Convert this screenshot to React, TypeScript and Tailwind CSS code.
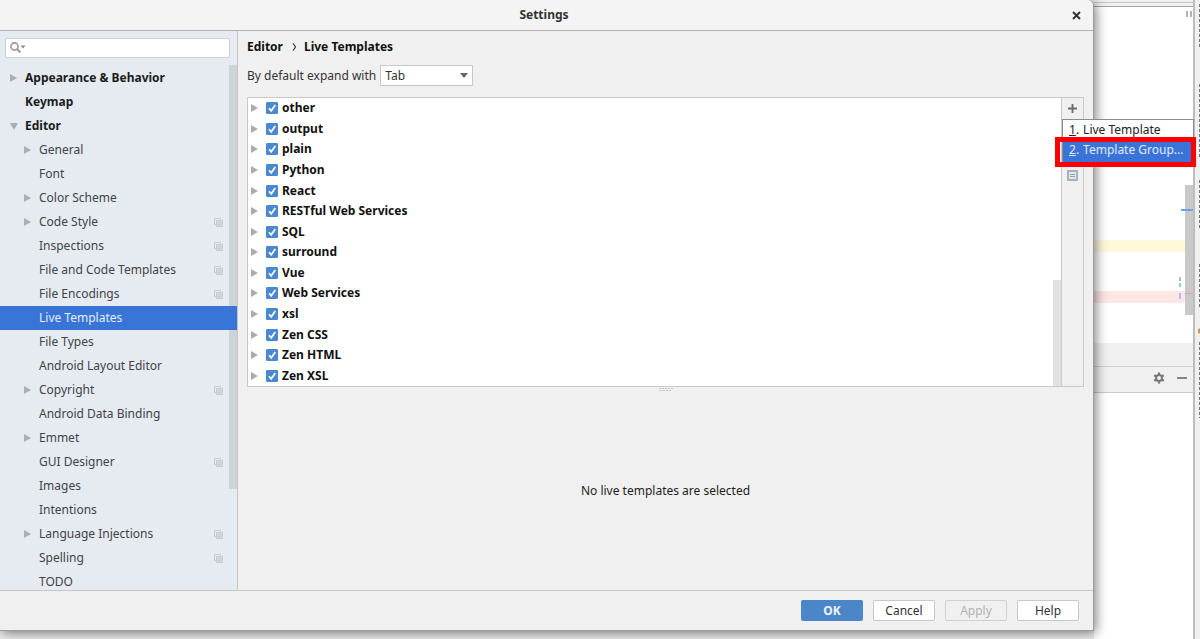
import { useState } from "react";

type TreeItem = {
  name: string;
  level: 0 | 1;
  arrow?: "closed" | "open";
  shared?: boolean;
};

const treeItems: TreeItem[] = [
  { name: "Appearance & Behavior", level: 0, arrow: "closed" },
  { name: "Keymap", level: 0 },
  { name: "Editor", level: 0, arrow: "open" },
  { name: "General", level: 1, arrow: "closed" },
  { name: "Font", level: 1 },
  { name: "Color Scheme", level: 1, arrow: "closed" },
  { name: "Code Style", level: 1, arrow: "closed", shared: true },
  { name: "Inspections", level: 1, shared: true },
  { name: "File and Code Templates", level: 1, shared: true },
  { name: "File Encodings", level: 1, shared: true },
  { name: "Live Templates", level: 1 },
  { name: "File Types", level: 1 },
  { name: "Android Layout Editor", level: 1 },
  { name: "Copyright", level: 1, arrow: "closed", shared: true },
  { name: "Android Data Binding", level: 1 },
  { name: "Emmet", level: 1, arrow: "closed" },
  { name: "GUI Designer", level: 1, shared: true },
  { name: "Images", level: 1 },
  { name: "Intentions", level: 1 },
  { name: "Language Injections", level: 1, arrow: "closed", shared: true },
  { name: "Spelling", level: 1, shared: true },
  { name: "TODO", level: 1 },
];

const templateGroups = [
  "other",
  "output",
  "plain",
  "Python",
  "React",
  "RESTful Web Services",
  "SQL",
  "surround",
  "Vue",
  "Web Services",
  "xsl",
  "Zen CSS",
  "Zen HTML",
  "Zen XSL",
];

const Arrow = ({ open = false }: { open?: boolean }) => (
  <svg viewBox="0 0 8 8" className="w-2 h-2 shrink-0 fill-[#a9adb1]" aria-hidden="true">
    {open ? <path d="M0 1h8L4 8z" /> : <path d="M0 0l7 4-7 4z" />}
  </svg>
);

const SharedIcon = () => (
  <svg viewBox="0 0 9 9" className="w-[9px] h-[9px] shrink-0" fill="none" stroke="#c6cacf" aria-hidden="true">
    <path d="M2.5 6.5h-2v-6h6v2" />
    <path d="M2.5 2.5h6v6h-6z" fill="#d6dade" />
    <path d="M4 4.5h3M4 6.5h3" />
  </svg>
);

const Sidebar = () => {
  const [selected, setSelected] = useState("Live Templates");

  return (
    <aside className="relative flex flex-col w-[238px] shrink-0 overflow-hidden bg-[#e6ebf2] border-r border-[#c3c6c9]">
      <div className="flex items-center gap-px h-5 mt-[7px] mb-2 ml-[5px] mr-[7px] px-1 bg-white border border-[#cdd1d5] rounded-xs">
        <svg viewBox="0 0 16 12" className="w-4 h-3 shrink-0" aria-hidden="true">
          <circle cx="4.5" cy="4.5" r="3.6" fill="none" stroke="#999" strokeWidth="1.6" />
          <path d="M7 7l3.4 3.6" stroke="#999" strokeWidth="2" />
          <path d="M10.5 3.5h5L13 6.5z" fill="#888" />
        </svg>
        <input type="search" aria-label="Search settings" className="w-full min-w-0 outline-none bg-transparent" />
      </div>

      {/* Last row is partly scrolled out of view */}
      <ul className="grid auto-rows-fr flex-1 -mb-1">
        {treeItems.map((item) => {
          const active = item.name === selected;
          return (
            <li key={item.name} className={active ? "relative z-10 bg-[#3875d7]" : ""}>
              <button
                type="button"
                onClick={() => setSelected(item.name)}
                className={`flex items-center w-full h-full pr-3.5 text-left leading-4 ${
                  item.level === 0 ? "pl-2.5 font-bold text-[#1c1c1c]" : active ? "pl-6 text-[#e6eefb]" : "pl-6 text-[#3f4347]"
                }`}
              >
                <span className="flex w-[15px] shrink-0">
                  {item.arrow && <Arrow open={item.arrow === "open"} />}
                </span>
                <span className="flex-1">{item.name}</span>
                {item.shared && <SharedIcon />}
              </button>
            </li>
          );
        })}
      </ul>

      <div className="absolute right-0 top-[34px] w-2 h-[424px] bg-[#cfd3d7]" />
    </aside>
  );
};

const GroupRow = ({ name }: { name: string }) => {
  const [checked, setChecked] = useState(true);

  return (
    <li className="flex items-center pl-[3px]">
      <Arrow />
      <label className="flex items-center gap-1 pl-[7px] font-bold text-[#111]">
        <span className="relative flex">
          <input
            type="checkbox"
            checked={checked}
            onChange={(e) => setChecked(e.target.checked)}
            className="appearance-none w-3 h-3 bg-white checked:bg-[#4a88cf] border border-[#4a88cf] rounded-[1px]"
          />
          {checked && (
            <svg viewBox="0 0 12 12" className="absolute inset-0 w-3 h-3 pointer-events-none" fill="none" stroke="#fff" strokeWidth="1.7">
              <path d="M3 6.2L5.2 8.8 9.3 3" />
            </svg>
          )}
        </span>
        {name}
      </label>
    </li>
  );
};

const AddMenu = () => (
  <div className="absolute left-0 top-[21px] z-20 w-[132px] bg-white border border-[#8c8c8c] text-[#222]">
    <button type="button" className="flex gap-1 w-full h-5 pl-1.5 items-center whitespace-nowrap">
      <span><u>1</u>.</span>Live Template
    </button>
    <button type="button" className="flex gap-1 w-full h-[22px] pl-1.5 pb-0.5 items-center whitespace-nowrap bg-[#3b74d8] text-[#e2ebfa]">
      <span><u>2</u>.</span>Template Group...
    </button>
    {/* Red marker round the second entry */}
    <div className="absolute -left-2 top-[17px] w-[141px] h-[30px] border-[5px] border-[#fe0000] pointer-events-none" />
  </div>
);

const MainPanel = () => (
  <main className="flex flex-col flex-1 min-w-0 px-[9px] pt-[7px]">
    <h1 className="flex gap-2 h-[18px] items-center font-bold text-[#111]">
      Editor
      <svg viewBox="0 0 5 8" className="w-[5px] h-2" fill="none" stroke="#333" strokeWidth="1.2" aria-hidden="true">
        <path d="M2 .5L4.6 4 2 7.5" />
      </svg>
      Live Templates
    </h1>

    <div className="flex items-center gap-1 mt-[9px]">
      <label htmlFor="expand">By default expand with</label>
      <div className="relative flex items-center">
        <select id="expand" defaultValue="Tab" className="appearance-none w-[93px] h-[21px] pl-1 bg-white border border-[#c8c8c8] outline-none">
          <option>Tab</option>
          <option>Enter</option>
          <option>Space</option>
        </select>
        <svg viewBox="0 0 8 5" className="absolute right-[5px] w-2 h-[5px] fill-[#666] pointer-events-none" aria-hidden="true">
          <path d="M0 0h8L4 5z" />
        </svg>
      </div>
    </div>

    <section className="flex h-[290px] mt-[11px] border border-[#c9c9c9]">
      <ul className="grid auto-rows-fr flex-1 bg-white">
        {templateGroups.map((name) => (
          <GroupRow key={name} name={name} />
        ))}
      </ul>
      <div className="flex items-end w-2 bg-white">
        <div className="w-full h-[106px] bg-[#e1e1e1]" />
      </div>
      <div className="relative flex flex-col items-center w-[22px] pt-[5px] border-l border-[#c9c9c9]">
        <button type="button" aria-label="Add">
          <svg viewBox="0 0 11 11" className="w-[11px] h-[11px]" stroke="#686868" strokeWidth="1.8">
            <path d="M5.5 1v9M1 5.5h9" />
          </svg>
        </button>
        <button type="button" aria-label="Duplicate" className="mt-14">
          <svg viewBox="0 0 11 11" className="w-[11px] h-[11px]" fill="none" aria-hidden="true">
            <path d="M0 0h11v11H0z" fill="#a9b2b6" />
            <path d="M2 2h7v7H2z" fill="#e4e8ea" />
            <path d="M3 4.5h5M3 6.5h5" stroke="#94a0a5" />
          </svg>
        </button>
        <AddMenu />
      </div>
    </section>

    <svg viewBox="0 0 14 4" className="w-3.5 h-1 mt-px self-center" stroke="#c4c4c4" aria-hidden="true">
      <path d="M0 .5h14M1 2.5h12" strokeDasharray="2 1" />
    </svg>

    <p className="flex flex-1 items-center justify-center text-[#1e1e1e]">No live templates are selected</p>
  </main>
);

const Dialog = () => (
  <div className="relative z-10 flex flex-col flex-1 min-w-0 mb-2 bg-[#f0f0f0] border-r border-b border-[#9c9c9c] rounded-tr-md shadow-[2px_2px_12px_rgba(0,0,0,0.5)]">
    <header className="flex items-center h-[31px] shrink-0 bg-[#f4f4f4] border-b border-[#b2b2b2] rounded-tr-md">
      <h2 className="flex-1 pl-4 text-center font-bold text-[#333]">Settings</h2>
      <button type="button" aria-label="Close" className="mr-3">
        <svg viewBox="0 0 9 9" className="w-[9px] h-[9px]" stroke="#333" strokeWidth="2">
          <path d="M1 1l7 7M8 1L1 8" />
        </svg>
      </button>
    </header>

    <div className="flex flex-1">
      <Sidebar />
      <MainPanel />
    </div>

    <footer className="flex items-center justify-end gap-2.5 h-10 shrink-0 pr-3.5 border-t border-[#c6c6c6]">
      <button type="button" className="w-[62px] h-[21px] rounded-xs bg-[#4a86c8] font-bold text-[#eef4fb]">OK</button>
      <button type="button" className="w-[62px] h-[21px] rounded-xs bg-white border border-[#c8c8c8] text-[#333]">Cancel</button>
      <button type="button" disabled className="w-[62px] h-[21px] rounded-xs border border-[#d0d0d0] text-[#b0b0b0]">Apply</button>
      <button type="button" className="w-[62px] h-[21px] rounded-xs bg-white border border-[#c8c8c8] text-[#333]">Help</button>
    </footer>
  </div>
);

// The slice of the IDE window that shows beside the dialog
const IdeWindow = () => (
  <div className="flex w-[106px] shrink-0 bg-[#f0f0f0]">
    <div className="flex flex-col flex-1">
      <div className="h-[3px] border-b border-[#c4c4c4]" />
      <div className="h-1 border-b border-[#a2a2a2]" />
      <div className="flex h-[336px] bg-white">
        <div className="flex flex-col flex-1">
          <div className="h-[233px]" />
          <div className="h-3 bg-[#fff9dc]" />
          <div className="flex flex-col items-end justify-end h-[39px] pr-1 pb-1">
            <div className="w-0.5 h-1 mb-0.5 bg-[#b9b9b9]" />
            <div className="w-0.5 h-1 bg-[#8fe09b]" />
          </div>
          <div className="flex justify-end h-3 pr-1 bg-[#fde6e6]">
            <div className="w-0.5 h-1.5 mt-0.5 bg-[#b3b9f5]" />
          </div>
        </div>
        <div className="flex flex-col items-center w-2">
          <svg viewBox="0 0 6 6" className="w-1.5 h-1.5 mt-1 shrink-0" stroke="#999" strokeWidth="1.5" aria-hidden="true">
            <path d="M1 0v6M5 0v6" />
          </svg>
          <div className="w-full h-[130px] mt-[168px] bg-[#c9c9c9]">
            <div className="h-0.5 mt-6 -ml-1 bg-[#6ba5e0]" />
            <div className="h-px mt-[82px] bg-[#e5a5a8]" />
          </div>
        </div>
      </div>
      <div className="h-6 border-b border-[#cfcfcf]" />
      <div className="flex items-center justify-end gap-3 h-[26px] pr-1.5 pb-1 border-b border-[#c9c9c9]">
        <button type="button" aria-label="Options">
          <svg viewBox="0 0 12 12" className="w-3 h-3" fill="none" stroke="#777" aria-hidden="true">
            <circle cx="6" cy="6" r="3" strokeWidth="2" />
            <path d="M6 .5v2M6 9.5v2M1.2 3.2l1.8 1M9 7.8l1.8 1M1.2 8.8l1.8-1M9 4.2l1.8-1" strokeWidth="2.2" />
          </svg>
        </button>
        <button type="button" aria-label="Hide" className="w-2.5 h-0.5 bg-[#858585]" />
      </div>
      <div className="flex-1 bg-white" />
    </div>
    <div className="flex flex-col items-end w-[7px] border-l-2 border-[#bdbdbd]">
      <svg viewBox="0 0 2 430" className="w-0.5 h-[430px]" fill="none" stroke="#777" aria-hidden="true">
        <path d="M1.5 4v44M1.5 84v74M1.5 180v50M1.5 264v44M1.5 342v76" strokeDasharray="3 2" />
        <circle cx="2" cy="331" r="2.5" fill="#c79a4a" stroke="none" />
      </svg>
    </div>
  </div>
);

const App = () => (
  <div className="flex min-h-screen overflow-hidden bg-[#ececec] font-['Noto_Sans',sans-serif] text-xs text-[#333]">
    <Dialog />
    <IdeWindow />
  </div>
);

export default App;
